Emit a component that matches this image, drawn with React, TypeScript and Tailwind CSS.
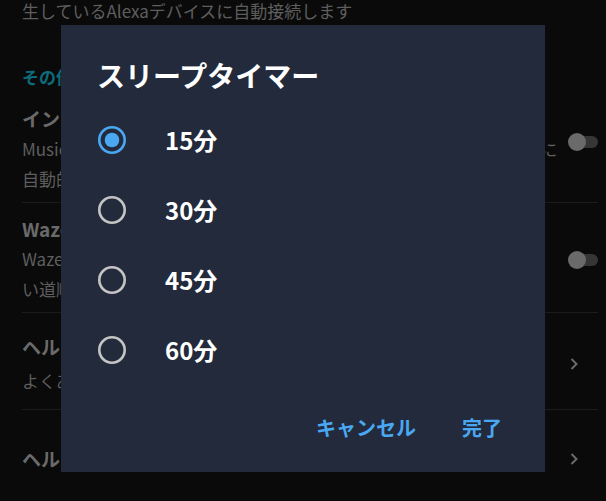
import React from "react";

const font = { fontFamily: '"Noto Sans CJK JP", "Noto Sans", sans-serif' };

function Toggle() {
  return (
    <div className="relative h-[18px] w-[30px] shrink-0">
      <div className="absolute left-[6px] right-0 top-[3px] h-[12px] rounded-full bg-[#363636]" />
      <div className="absolute left-0 top-0 h-[18px] w-[18px] rounded-full bg-[#6a6a6a]" />
    </div>
  );
}

function Chevron() {
  return (
    <svg width="12" height="16" viewBox="0 0 12 16" className="shrink-0">
      <path d="M3.5 3 L8.5 8 L3.5 13" fill="none" stroke="#6a6a6a" strokeWidth="2" />
    </svg>
  );
}

function Radio({ checked }: { checked: boolean }) {
  return (
    <svg width="30" height="30" viewBox="0 0 30 30" className="shrink-0">
      <circle
        cx="15"
        cy="15"
        r="12.7"
        fill="none"
        stroke={checked ? "#4aa8f2" : "#c4c4c4"}
        strokeWidth="2.6"
      />
      {checked && <circle cx="15" cy="15" r="7.3" fill="#4aa8f2" />}
    </svg>
  );
}

const options = ["15分", "30分", "45分", "60分"];

export default function App() {
  return (
    <div className="relative h-[501px] w-[606px] overflow-hidden bg-[#0a0a0a]" style={font}>
      {/* settings list behind the dialog */}
      <div className="pl-[22px] pr-[8px]">
        <div className="-mt-[4px] whitespace-nowrap text-[17px] leading-[30px] text-[#5e5e5e]">
          生しているAlexaデバイスに自動接続します
        </div>
        <div className="mt-[36px] text-[17px] font-bold leading-[30px] text-[#0d6b7b]">その他</div>

        <div className="flex items-start border-b border-[#1b1b1b] pb-[8px] pt-[12px]">
          <div className="min-w-0 flex-1">
            <div className="text-[19px] font-bold leading-[30px] text-[#6a6a6a]">インターネットラジオ</div>
            <div className="whitespace-nowrap text-[17px] leading-[30px] text-[#5e5e5e]">
              Music、オーディオブック、ポッドキャストを車内で再生している時に
              <br />
              自動的に接続します
            </div>
          </div>
          <div className="mt-[29px]">
            <Toggle />
          </div>
        </div>

        <div className="flex items-center border-b border-[#1b1b1b] pb-[8px] pt-[11px]">
          <div className="flex-1">
            <div className="text-[19px] font-bold leading-[30px] text-[#6a6a6a]">Waze</div>
            <div className="text-[17px] leading-[30px] text-[#5e5e5e]">
              Wazeのナビゲーションを使用して
              <br />
              い道順を表示します
            </div>
          </div>
          <div className="mt-[2px]">
            <Toggle />
          </div>
        </div>

        <div className="flex items-center border-b border-[#1b1b1b] pb-[13px] pt-[19px]">
          <div className="flex-1">
            <div className="text-[19px] font-bold leading-[30px] text-[#6a6a6a]">ヘルプ</div>
            <div className="mt-[4px] text-[17px] leading-[30px] text-[#5e5e5e]">よくある質問</div>
          </div>
          <div className="pr-[18px]">
            <Chevron />
          </div>
        </div>

        <div className="flex items-center pt-[34px]">
          <div className="flex-1 text-[19px] font-bold leading-[30px] text-[#6a6a6a]">ヘルプとフィードバック</div>
          <div className="pr-[18px]">
            <Chevron />
          </div>
        </div>
      </div>

      {/* sleep timer dialog */}
      <div className="absolute left-[61px] top-[25px] h-[447px] w-[484px] bg-[#222a3b] pl-[36px] pr-[43px] pt-[32px]">
        <div className="text-[28px] font-bold leading-[36px] text-white">スリープタイマー</div>
        <div className="mt-[12px]">
          {options.map((o, i) => (
            <div key={o} className="flex h-[70px] items-center">
              <Radio checked={i === 0} />
              <span className="ml-[38px] text-[24px] font-bold text-white">{o}</span>
            </div>
          ))}
        </div>
        <div className="mt-[28px] flex justify-end gap-[46px] text-[20px] font-bold leading-[30px] text-[#4aa8f2]">
          <span>キャンセル</span>
          <span>完了</span>
        </div>
      </div>
    </div>
  );
}
